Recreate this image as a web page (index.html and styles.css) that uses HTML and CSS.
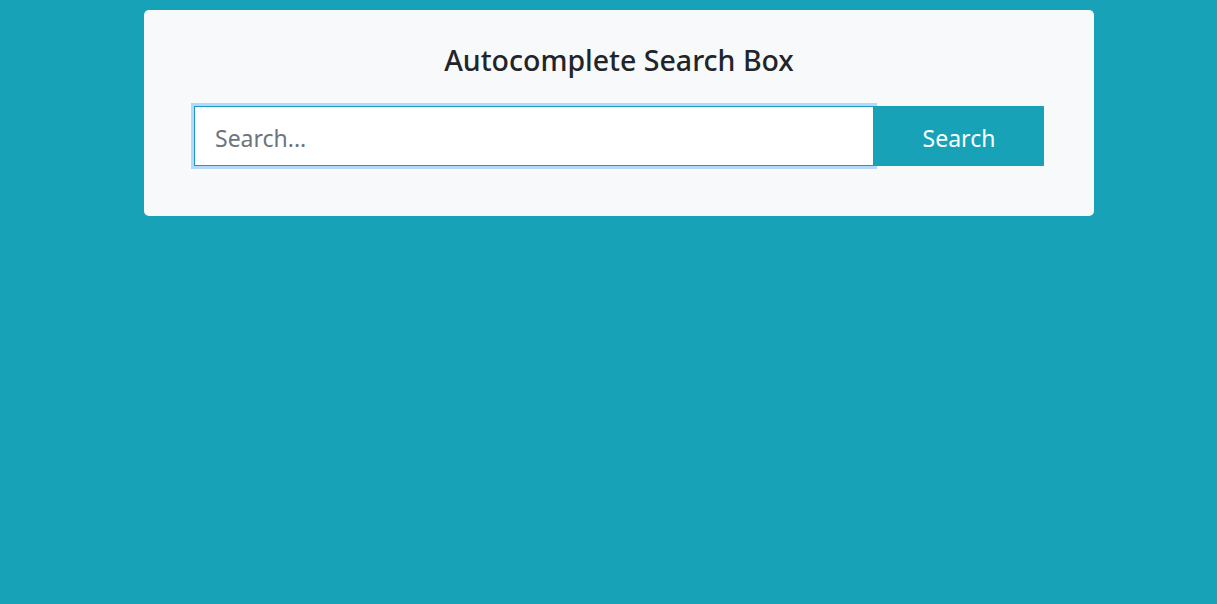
FILE: index.html
```html
<!DOCTYPE html>
<html lang="en">
<head>
<meta charset="utf-8">
<title>Autocomplete Search Box</title>
<link rel="stylesheet" href="styles.css">
</head>
<body>
  <div class="card">
    <h3 class="title">Autocomplete Search Box</h3>
    <form class="search-row">
      <input class="search-input" type="text" placeholder="Search..." autofocus>
      <button class="search-btn" type="button">Search</button>
    </form>
  </div>
</body>
</html>
```

FILE: styles.css
```css
html, body {
  margin: 0;
  padding: 0;
}
body {
  background: #17a2b8;
  font-family: "Noto Sans", "Open Sans", sans-serif;
  min-height: 604px;
}
.card {
  width: 950px;
  box-sizing: border-box;
  margin: 10px 0 0 144px;
  background: #f8f9fa;
  border-radius: 5px;
  padding: 33px 50px 50px;
}
.title {
  margin: 0 0 29px;
  text-align: center;
  font-size: 28.5px;
  line-height: 34px;
  font-weight: 500;
  color: #212529;
}
.search-row {
  display: flex;
  margin: 0;
}
.search-input {
  flex: 1 1 auto;
  min-width: 0;
  height: 60px;
  box-sizing: border-box;
  margin: 0;
  border: 1px solid #1a9cc2;
  border-radius: 0;
  padding: 4px 20px 0;
  font-family: inherit;
  font-size: 23px;
  color: #495057;
  background: #fff;
  outline: none;
  box-shadow: 0 0 0 3px #b5d7f8;
}
.search-input::placeholder {
  color: #6c757d;
}
.search-btn {
  position: relative;
  flex: none;
  width: 170px;
  height: 60px;
  margin: 0;
  border: none;
  border-radius: 0;
  background: #17a2b8;
  color: #fff;
  font-family: inherit;
  font-size: 23px;
  padding: 4px 0 0;
}
```
